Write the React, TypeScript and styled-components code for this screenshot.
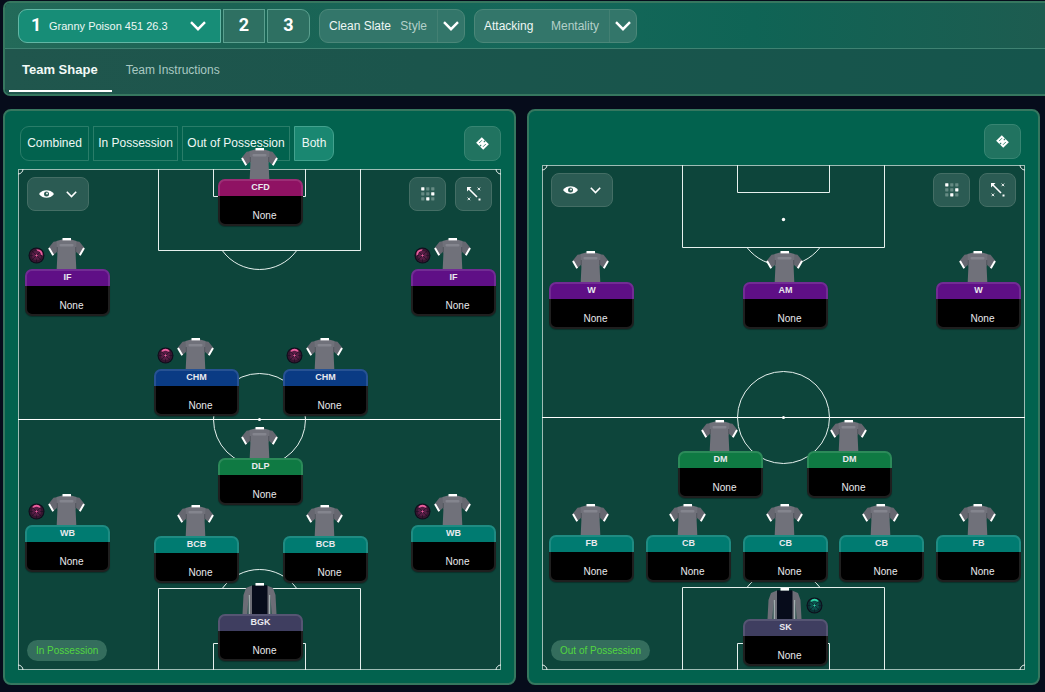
import React from 'react';
import styled, { createGlobalStyle, css } from 'styled-components';

const GlobalStyle = createGlobalStyle`
  * { box-sizing: border-box; }
  body {
    margin: 0;
    background: #060c1b;
    color: #eef7f4;
    font-family: 'Liberation Sans', Arial, sans-serif;
    font-size: 12px;
    line-height: 16px;
  }
  button, select { font: inherit; color: inherit; }
  button { cursor: pointer; padding: 0; }
`;

const Page = styled.div`
  display: flex;
  flex-direction: column;
  min-height: 100vh;
  padding: 1px 0 7px 3px;
`;

/* ---------- header ---------- */

const Header = styled.header`
  border: 2px solid #36775f;
  border-right: 0;
  border-radius: 7px 0 0 7px;
  overflow: hidden;
`;

const Toolbar = styled.div`
  display: flex;
  align-items: center;
  gap: 9px;
  padding: 6px 13px 5px;
  border-bottom: 1px solid #3f8272;
  background: linear-gradient(90deg, #236a59 0%, #1b6354 22%, #15685a 50%, #0f6455 72%, #1d5c50 100%);
`;

const SlotGroup = styled.div`
  display: flex;
  gap: 2px;
`;

const slotBox = css`
  height: 34px;
  border: 1px solid #5ba08f;
  background: #2e7062;
`;

const ActiveSlot = styled.div`
  ${slotBox}
  display: flex;
  align-items: center;
  width: 203px;
  padding: 0 14px 0 12px;
  border-radius: 9px 0 0 9px;
  background: #178d77;
  border-color: #62b7a5;
`;

const SlotNumber = styled.span`
  display: block;
  padding-bottom: 2px;
  font-family: Roboto, sans-serif;
  font-size: 18px;
  line-height: 20px;
  font-weight: 700;
  color: #fff;
`;

const SlotPick = styled.button`
  width: 18px;
  border: 0;
  background: none;
  text-align: left;
`;

const SlotButton = styled.button<{ $last?: boolean }>`
  ${slotBox}
  width: ${p => (p.$last ? 43 : 42)}px;
  border-radius: ${p => (p.$last ? '0 9px 9px 0' : '0')};
`;

const PlainSelect = styled.select`
  appearance: none;
  flex: 1;
  min-width: 0;
  border: 0;
  padding: 0;
  margin: 0;
  background: transparent;
  outline: none;
`;

const SlotSelect = styled(PlainSelect)`
  font-size: 11px;
`;

const Dropdown = styled.label<{ $width: number }>`
  display: flex;
  align-items: center;
  width: ${p => p.$width}px;
  height: 34px;
  padding-left: 9px;
  border: 1px solid #4b8779;
  border-radius: 9px;
  background: #33766a;
`;

const DropdownCaption = styled.span`
  padding-right: 10px;
  color: #b3d0c9;
`;

const DropdownArrow = styled.span`
  display: flex;
  align-items: center;
  align-self: stretch;
  padding: 0 5px;
  border-left: 1px solid #438073;
`;

const Tabs = styled.nav`
  display: flex;
  gap: 1px;
  height: 45px;
  padding: 0 4px 2px;
  background: linear-gradient(90deg, #20564d 0%, #1b554c 40%, #15554c 100%);
`;

const Tab = styled.a<{ $active?: boolean }>`
  display: flex;
  align-items: center;
  padding: 0 14px 0 13px;
  border-bottom: 2px solid ${p => (p.$active ? '#fff' : 'transparent')};
  color: ${p => (p.$active ? '#f2faf8' : '#a9c9c2')};
  font-size: ${p => (p.$active ? 13 : 12)}px;
  font-weight: ${p => (p.$active ? 700 : 400)};
  text-decoration: none;
`;

/* ---------- boards ---------- */

const Boards = styled.main`
  flex: 1;
  display: grid;
  grid-template-columns: 1fr 1fr;
  gap: 11px;
  margin-top: 13px;
  padding-right: 5px;
`;

const Board = styled.section`
  display: flex;
  flex-direction: column;
  padding: 0 13px 13px;
  border: 2px solid #36775f;
  border-radius: 8px;
  background: #02624e;
`;

const BoardHeader = styled.div<{ $compact?: boolean }>`
  display: flex;
  justify-content: space-between;
  padding: ${p => (p.$compact ? '13px 4px 6px 2px' : '15px 0 8px 2px')};
`;

const Segments = styled.div`
  display: flex;
  gap: 4px;
`;

const Segment = styled.button<{ $width: number; $active?: boolean }>`
  width: ${p => p.$width}px;
  height: 35px;
  padding-bottom: 2px;
  border: 1px solid ${p => (p.$active ? '#43a28e' : '#2a7d69')};
  background: ${p => (p.$active ? '#1a8771' : 'transparent')};
  white-space: nowrap;
  &:first-child { border-radius: 9px 0 0 9px; }
  &:last-child { border-radius: 0 9px 9px 0; }
`;

const IconButton = styled.button<{ $wide?: boolean; $onPitch?: boolean }>`
  display: flex;
  align-items: center;
  justify-content: center;
  gap: 12px;
  width: ${p => (p.$wide ? 62 : 37)}px;
  height: ${p => (p.$onPitch ? 34 : 35)}px;
  border: 1px solid ${p => (p.$onPitch ? '#446e65' : '#378572')};
  border-radius: 8px;
  background: ${p => (p.$onPitch ? '#2b5b53' : '#217360')};
`;

const Pitch = styled.div`
  position: relative;
  flex: 1;
  display: flex;
  flex-direction: column;
  justify-content: space-between;
  align-items: flex-start;
  min-height: 460px;
  padding: 8px 9px 9px;
  background: #0d453b;
`;

const PitchLines = styled.svg`
  position: absolute;
  inset: 0;
  width: 100%;
  height: 100%;
`;

const PitchTools = styled.div`
  position: relative;
  display: flex;
  gap: 9px;
  align-self: stretch;
  & > :first-child { margin-right: auto; }
`;

const PhasePill = styled.span`
  position: relative;
  padding: 3px 9px 2px;
  border-radius: 11px;
  background: #346d5d;
  color: #52d63f;
  font-size: 10px;
`;

/* ---------- players ---------- */

const PlayerSpot = styled.div<{ $x: number; $y: number }>`
  position: absolute;
  left: calc(${p => p.$x}% - 42px);
  top: calc(${p => p.$y}% - 31px);
  width: 85px;
`;

const Shirt = styled.svg`
  display: block;
  margin-left: 23px;
`;

const Card = styled.button<{ $color: string }>`
  position: relative;
  display: block;
  width: 100%;
  height: 47px;
  border: 0;
  border-radius: 7px;
  background: linear-gradient(${p => p.$color} 17px, #000 17px);
  box-shadow: 0 1px 1px rgba(0, 0, 0, 0.3);
  color: #e9e9ee;
  &::after {
    content: '';
    position: absolute;
    inset: 0;
    border: 2px solid rgba(255, 255, 255, 0.12);
    border-radius: 7px;
  }
`;

const Role = styled.span`
  display: block;
  height: 17px;
  font-size: 9px;
  line-height: 17px;
  font-weight: 700;
`;

const PlayerName = styled.span`
  display: block;
  height: 30px;
  padding: 10px 0 0 8px;
  font-size: 10px;
  line-height: 20px;
`;

const DutyBadge = styled.svg<{ $side: 'left' | 'right' }>`
  position: absolute;
  top: 9px;
  left: ${p => (p.$side === 'left' ? 3 : 63)}px;
`;

/* ---------- drawings ---------- */

const BigChevron = () => (
  <svg width="16" height="10" viewBox="0 0 16 10" fill="none" stroke="#fff" strokeWidth="2.400" aria-hidden="true">
    <path d="M1 1.200 8 8.200 15 1.200" />
  </svg>
);

const SmallChevron = () => (
  <svg width="11" height="7" viewBox="0 0 11 7" fill="none" stroke="#fff" strokeWidth="1.600" aria-hidden="true">
    <path d="M.8 .8 5.500 5.500 10.200 .8" />
  </svg>
);

const EyeIcon = () => (
  <svg width="15" height="8" viewBox="0 0 15 8" aria-hidden="true">
    <path d="M0 4C2 1.200 4.800 .2 7.500 .2S13 1.200 15 4C13 6.800 10.200 7.800 7.500 7.800S2 6.800 0 4Z" fill="#fff" />
    <circle cx="7.500" cy="4" r="2.500" fill="#2b5b53" />
    <circle cx="8" cy="3.500" r=".9" fill="#fff" />
  </svg>
);

const CardsIcon = () => (
  <svg width="15" height="15" viewBox="0 0 15 15" aria-hidden="true">
    <g transform="rotate(45 7.500 7.500)">
      <path d="M2.500 3.500H12.500V11.500H2.500Z" fill="#fff" />
      <path d="M7.500 3.500V5.700M7.500 9.300V11.500" stroke="#217360" strokeWidth="1" />
      <path d="M4.800 5.500V9.500M10.200 5.500V9.500" stroke="#217360" strokeWidth=".8" />
    </g>
  </svg>
);

const GridIcon = () => (
  <svg width="14" height="14" viewBox="0 0 14 14" aria-hidden="true">
    {[0, 1, 2].map(row =>
      [0, 1, 2].map(col => {
        const bright = (row === 0 && col === 0) || (row === 1 && col === 2) || (row === 2 && col === 1);
        return (
          <rect key={`${row}${col}`} x={col * 5 + 0.2} y={row * 5 + 0.2} width="3.200" height="3.200" rx=".4" fill={bright ? '#fff' : '#668b84'} />
        );
      })
    )}
  </svg>
);

const MovementIcon = () => (
  <svg width="14" height="14" viewBox="0 0 14 14" fill="none" stroke="#fff" aria-hidden="true">
    <path d="M1.500 1.500 10 10" strokeWidth="1.600" />
    <path d="M0 0H4.500L0 4.500Z" fill="#fff" stroke="none" />
    <path d="M10.600 .6 13.200 3.200M13.200 .6 10.600 3.200M.6 10.600 3.200 13.200M3.200 10.600 .6 13.200" strokeWidth=".9" />
    <path d="M11.500 11.500H13.500V13.500H11.500Z" fill="#fff" stroke="none" />
  </svg>
);

const OutfieldShirt = () => (
  <Shirt width="37" height="31" viewBox="0 0 37 31" aria-hidden="true">
    <path d="M10.500 3 5.500 3.800 0.500 10 5 17.500 10.500 12.500Z" fill="#666770" />
    <path d="M26.500 3 31.500 3.800 36.500 10 32 17.500 26.500 12.500Z" fill="#666770" />
    <path d="M8.500 3 14 1.600H23L28.500 3 27.600 16 28.300 31H8.700L9.400 16Z" fill="#70717a" />
    <path d="M9.300 9V14M27.700 9V14" stroke="#50535b" strokeWidth=".9" />
    <path d="M1 10 5.200 17.200M36 10 31.800 17.200" stroke="#fff" strokeWidth="2" />
    <rect x="14.500" y="0" width="8.500" height="2.400" fill="#fff" />
    <rect x="11.500" y="6" width="14" height="2.500" rx="1" fill="#84858e" />
  </Shirt>
);

const KeeperShirt = () => (
  <Shirt width="37" height="31" viewBox="0 0 37 31" aria-hidden="true">
    <path d="M11 2.500 5 5 2.500 12 1.500 31H6.500L7.500 12V31H11Z" fill="#6c6d76" />
    <path d="M26 2.500 32 5 34.500 12 35.500 31H30.500L29.500 12V31H26Z" fill="#6c6d76" />
    <path d="M8.300 12V31M28.700 12V31" stroke="#b9c4c4" strokeWidth=".9" />
    <path d="M11 2.300H26.500V31H11Z" fill="#070c1b" />
    <rect x="14.500" y="0" width="8.500" height="2.600" fill="#fff" />
  </Shirt>
);

type Badge = { side: 'left' | 'right'; color: string; base: string; rim: string; angle: number };

const Duty = ({ side, color, base, rim, angle }: Badge) => (
  <DutyBadge $side={side} width="17" height="17" viewBox="0 0 17 17" aria-hidden="true">
    <circle cx="8.500" cy="8.500" r="8" fill="#0e0e1c" />
    <circle cx="8.500" cy="8.500" r="6.900" fill={rim} />
    <circle cx="8.500" cy="8.500" r="4.800" fill={base} />
    <path d="M3.500 3.500 13.500 13.500M13.500 3.500 3.500 13.500M1.500 8.500H5M12 8.500H15.500M8.500 12V15.500" stroke="#0e0e1c" strokeWidth=".8" opacity=".6" />
    <path d="M4 4.200Q8.500 -.6 13 4.200L11.300 4.700Q8.500 2.900 5.700 4.700Z" fill={color} transform={`rotate(${angle} 8.500 8.500)`} />
    <path d="M8.500 7.300V9.700M7.300 8.500H9.700" stroke={color} strokeWidth=".8" />
  </DutyBadge>
);

const Markings = ({ height, half, spot }: { height: number; half: number; spot: number }) => {
  const h = height;
  const box = half < 251 ? 82 : 83;
  const mid = half + 0.5;
  const arc = Math.sqrt(46 * 46 - (box - spot) * (box - spot));
  return (
    <PitchLines viewBox={`0 0 483 ${h}`} preserveAspectRatio="none" fill="none" stroke="#e6f1ee" strokeWidth="1" aria-hidden="true">
      <rect x=".5" y=".5" width="482" height={h - 1} stroke="#9dbdb5" />
      <path d={`M0 ${mid}H483`} stroke="#fff" />
      <circle cx="241.500" cy={mid} r="46" />
      <circle cx="241.500" cy={mid} r="1.500" fill="#fff" stroke="none" />
      <circle cx="241.500" cy={spot} r="1.700" fill="#fff" stroke="none" />
      <circle cx="241.500" cy={h - spot} r="1.700" fill="#fff" stroke="none" />
      <path d={`M140.500 0V${box - 0.5}H342.500V0`} />
      <path d={`M195.500 0V27.500H287.500V0`} />
      <path d={`M140.500 ${h}V${h - box + 0.5}H342.500V${h}`} />
      <path d={`M195.500 ${h}V${h - 26.5}H287.500V${h}`} />
      <path d={`M${241.5 - arc} ${box}A46 46 0 0 0 ${241.5 + arc} ${box}`} />
      <path d={`M${241.5 - arc} ${h - box}A46 46 0 0 1 ${241.5 + arc} ${h - box}`} />
      <path d={`M5 0A5 5 0 0 1 0 5M478 0A5 5 0 0 0 483 5M5 ${h}A5 5 0 0 0 0 ${h - 5}M478 ${h}A5 5 0 0 1 483 ${h - 5}`} />
    </PitchLines>
  );
};

/* ---------- data ---------- */

const roleColors = {
  striker: '#8f1263',
  winger: '#5f0f86',
  midfield: '#0a3b84',
  holding: '#0f7a43',
  defence: '#007b71',
  keeper: '#3f3e60',
};

type Player = { role: string; line: keyof typeof roleColors; x: number; y: number; badge?: Badge };

const pink = (angle: number): Badge => ({ side: 'left', color: '#ec5f9f', base: '#551d44', rim: '#371630', angle });

const inPossession: Player[] = [
  { role: 'CFD', line: 'striker', x: 200, y: 10 },
  { role: 'IF', line: 'winger', x: 7, y: 100, badge: pink(45) },
  { role: 'IF', line: 'winger', x: 393, y: 100, badge: pink(-45) },
  { role: 'CHM', line: 'midfield', x: 136, y: 200, badge: pink(0) },
  { role: 'CHM', line: 'midfield', x: 265, y: 200, badge: pink(0) },
  { role: 'DLP', line: 'holding', x: 200, y: 289 },
  { role: 'WB', line: 'defence', x: 7, y: 356, badge: pink(0) },
  { role: 'BCB', line: 'defence', x: 136, y: 367 },
  { role: 'BCB', line: 'defence', x: 265, y: 367 },
  { role: 'WB', line: 'defence', x: 393, y: 356, badge: pink(0) },
  { role: 'BGK', line: 'keeper', x: 200, y: 445 },
];

const outOfPossession: Player[] = [
  { role: 'W', line: 'winger', x: 7, y: 117 },
  { role: 'AM', line: 'winger', x: 201, y: 117 },
  { role: 'W', line: 'winger', x: 394, y: 117 },
  { role: 'DM', line: 'holding', x: 136, y: 286 },
  { role: 'DM', line: 'holding', x: 265, y: 286 },
  { role: 'FB', line: 'defence', x: 7, y: 370 },
  { role: 'CB', line: 'defence', x: 104, y: 370 },
  { role: 'CB', line: 'defence', x: 201, y: 370 },
  { role: 'CB', line: 'defence', x: 297, y: 370 },
  { role: 'FB', line: 'defence', x: 394, y: 370 },
  { role: 'SK', line: 'keeper', x: 201, y: 454, badge: { side: 'right', color: '#2fd3a5', base: '#0b4f4c', rim: '#0a3335', angle: 0 } },
];

const views = [
  { label: 'Combined', width: 69 },
  { label: 'In Possession', width: 85 },
  { label: 'Out of Possession', width: 108 },
  { label: 'Both', width: 40 },
];

const FormationPitch = ({ phase, players, height, half, spot }: { phase: string; players: Player[]; height: number; half: number; spot: number }) => (
  <Pitch>
    <Markings height={height} half={half} spot={spot} />
    <PitchTools>
      <IconButton $wide $onPitch aria-haspopup="menu" aria-label="Display options">
        <EyeIcon />
        <SmallChevron />
      </IconButton>
      <IconButton $onPitch aria-label="Formations"><GridIcon /></IconButton>
      <IconButton $onPitch aria-label="Player movement"><MovementIcon /></IconButton>
    </PitchTools>
    {players.map((p, i) => (
      <PlayerSpot key={i} $x={((p.x + 42) / 483) * 100} $y={(p.y / height) * 100}>
        {p.badge && <Duty {...p.badge} />}
        {p.line === 'keeper' ? <KeeperShirt /> : <OutfieldShirt />}
        <Card $color={roleColors[p.line]}>
          <Role>{p.role}</Role>
          <PlayerName>None</PlayerName>
        </Card>
      </PlayerSpot>
    ))}
    <PhasePill>{phase}</PhasePill>
  </Pitch>
);

export default function App() {
  return (
    <Page>
      <GlobalStyle />
      <Header>
        <Toolbar>
          <SlotGroup>
            <ActiveSlot>
              <SlotPick aria-pressed="true"><SlotNumber>1</SlotNumber></SlotPick>
              <SlotSelect aria-label="Tactic">
                <option>Granny Poison 451 26.3</option>
              </SlotSelect>
              <BigChevron />
            </ActiveSlot>
            <SlotButton><SlotNumber>2</SlotNumber></SlotButton>
            <SlotButton $last><SlotNumber>3</SlotNumber></SlotButton>
          </SlotGroup>
          <Dropdown $width={146}>
            <PlainSelect><option>Clean Slate</option></PlainSelect>
            <DropdownCaption>Style</DropdownCaption>
            <DropdownArrow><BigChevron /></DropdownArrow>
          </Dropdown>
          <Dropdown $width={163}>
            <PlainSelect><option>Attacking</option></PlainSelect>
            <DropdownCaption>Mentality</DropdownCaption>
            <DropdownArrow><BigChevron /></DropdownArrow>
          </Dropdown>
        </Toolbar>
        <Tabs>
          <Tab href="#shape" $active aria-current="page">Team Shape</Tab>
          <Tab href="#instructions">Team Instructions</Tab>
        </Tabs>
      </Header>
      <Boards>
        <Board aria-label="In Possession">
          <BoardHeader>
            <Segments>
              {views.map(v => (
                <Segment key={v.label} $width={v.width} $active={v.label === 'Both'} aria-pressed={v.label === 'Both'}>
                  {v.label}
                </Segment>
              ))}
            </Segments>
            <IconButton aria-label="Quick pick"><CardsIcon /></IconButton>
          </BoardHeader>
          <FormationPitch phase="In Possession" players={inPossession} height={501} half={250} spot={54.5} />
        </Board>
        <Board aria-label="Out of Possession">
          <BoardHeader $compact>
            <span />
            <IconButton aria-label="Quick pick"><CardsIcon /></IconButton>
          </BoardHeader>
          <FormationPitch phase="Out of Possession" players={outOfPossession} height={505} half={252} spot={54.5} />
        </Board>
      </Boards>
    </Page>
  );
}
